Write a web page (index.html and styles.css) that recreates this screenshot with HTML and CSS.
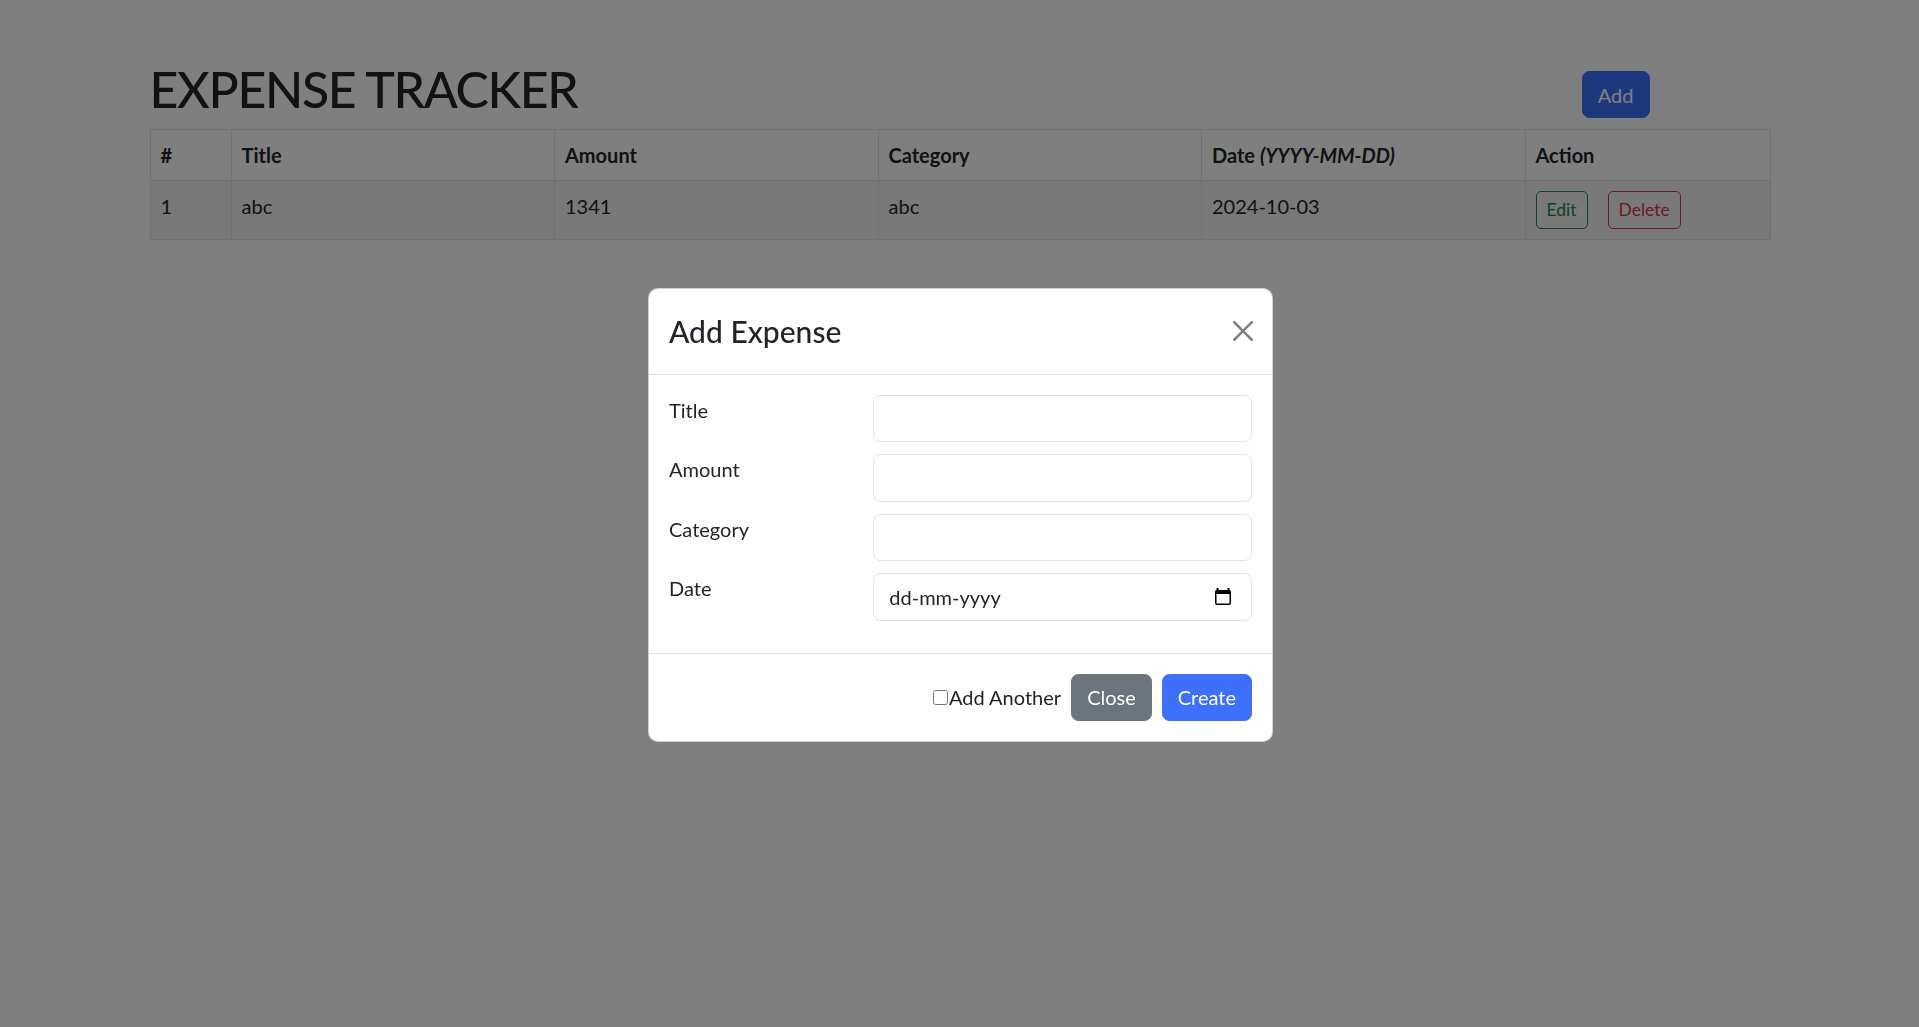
FILE: index.html
```html
<!DOCTYPE html>
<html lang="en">
<head>
<meta charset="utf-8">
<title>Expense Tracker</title>
<link rel="stylesheet" href="styles.css">
</head>
<body>
<div class="page">
  <div class="container">
    <div class="topbar">
      <h1 class="page-title">EXPENSE TRACKER</h1>
      <button class="btn btn-primary btn-add" type="button">Add</button>
    </div>
    <table class="table">
      <colgroup>
        <col class="c-num">
        <col class="c-wide">
        <col class="c-wide">
        <col class="c-wide">
        <col class="c-wide">
        <col class="c-action">
      </colgroup>
      <thead>
        <tr>
          <th>#</th>
          <th>Title</th>
          <th>Amount</th>
          <th>Category</th>
          <th>Date <i>(YYYY-MM-DD)</i></th>
          <th>Action</th>
        </tr>
      </thead>
      <tbody>
        <tr class="striped">
          <td>1</td>
          <td>abc</td>
          <td>1341</td>
          <td>abc</td>
          <td>2024-10-03</td>
          <td><button class="btn-sm btn-edit" type="button">Edit</button><button class="btn-sm btn-delete" type="button">Delete</button></td>
        </tr>
      </tbody>
    </table>
  </div>
</div>

<div class="backdrop"></div>

<div class="modal-wrap">
  <div class="modal">
    <div class="modal-header">
      <h4 class="modal-title">Add Expense</h4>
      <button class="btn-close" type="button" aria-label="Close">
        <svg viewBox="0 0 16 16" width="20" height="20" aria-hidden="true"><path d="M.293.293a1 1 0 0 1 1.414 0L8 6.586 14.293.293a1 1 0 1 1 1.414 1.414L9.414 8l6.293 6.293a1 1 0 0 1-1.414 1.414L8 9.414l-6.293 6.293a1 1 0 0 1-1.414-1.414L6.586 8 .293 1.707a1 1 0 0 1 0-1.414z"/></svg>
      </button>
    </div>
    <div class="modal-body">
      <div class="form-row">
        <label class="form-label">Title</label>
        <input class="form-control" type="text">
      </div>
      <div class="form-row">
        <label class="form-label">Amount</label>
        <input class="form-control" type="text">
      </div>
      <div class="form-row">
        <label class="form-label">Category</label>
        <input class="form-control" type="text">
      </div>
      <div class="form-row">
        <label class="form-label">Date</label>
        <div class="form-control date-control">
          <span class="date-text">dd-mm-yyyy</span>
          <svg class="cal-icon" viewBox="0 0 16 17" width="16" height="17" aria-hidden="true">
            <rect x="1.5" y="0" width="2" height="3"/>
            <rect x="12.5" y="0" width="2" height="3"/>
            <rect x="0.75" y="2.75" width="14.5" height="13.5" rx="1.2" fill="none" stroke="#000" stroke-width="1.5"/>
            <rect x="0.75" y="2.75" width="14.5" height="3.25"/>
          </svg>
        </div>
      </div>
    </div>
    <div class="modal-footer">
      <label class="check"><input class="check-box" type="checkbox">Add Another</label>
      <button class="btn btn-secondary" type="button">Close</button>
      <button class="btn btn-primary" type="button">Create</button>
    </div>
  </div>
</div>
</body>
</html>
```

FILE: styles.css
```css
* {
  box-sizing: border-box;
}

html, body {
  margin: 0;
  padding: 0;
  background: #ffffff;
}

body {
  font-family: "Lato", "Noto Sans", sans-serif;
  font-size: 20px;
  line-height: 30px;
  color: #212529;
  height: 1027px;
  overflow: hidden;
}

.container {
  width: 1620px;
  margin: 0 auto;
}

.topbar {
  display: flex;
  align-items: flex-start;
  justify-content: space-between;
  padding-top: 59px;
  margin-bottom: 10px;
}

.page-title {
  margin: 0;
  font-size: 50px;
  line-height: 60px;
  font-weight: 500;
  letter-spacing: -1.3px;
  color: #212529;
}

.btn {
  font-family: inherit;
  font-size: 20px;
  line-height: 30px;
  padding: 7.5px 15px;
  border: 1px solid transparent;
  border-radius: 7.5px;
  color: #ffffff;
  cursor: pointer;
}

.btn-primary {
  background: #3c70fd;
  border-color: #3c70fd;
}

.btn-secondary {
  background: #6c757d;
  border-color: #6c757d;
}

.btn-add {
  margin-top: 12px;
  margin-right: 120px;
}

.table {
  width: 100%;
  border-collapse: collapse;
  table-layout: fixed;
  color: #212529;
}

.c-num { width: 81px; }
.c-wide { width: 323.5px; }
.c-action { width: 245px; }

.table th,
.table td {
  padding: 10px;
  border: 1px solid #dee2e6;
  text-align: left;
  vertical-align: top;
  font-size: 20px;
  line-height: 30px;
  background: #ffffff;
}

.table th {
  font-weight: 700;
}

.table .striped td {
  background: #f2f2f2;
}

.btn-sm {
  font-family: inherit;
  font-size: 17.5px;
  line-height: 26.25px;
  padding: 5px 10px;
  border-radius: 5px;
  background: transparent;
  border: 1px solid;
  vertical-align: top;
  cursor: pointer;
}

.btn-edit {
  color: #198754;
  border-color: #198754;
}

.btn-delete {
  color: #dc3545;
  border-color: #dc3545;
  margin-left: 20px;
}

.backdrop {
  position: fixed;
  inset: 0;
  background: rgba(0, 0, 0, 0.5);
}

.modal-wrap {
  position: fixed;
  inset: 0;
  display: flex;
  align-items: center;
  justify-content: center;
  padding-top: 2px;
  padding-left: 2px;
}

.modal {
  width: 625px;
  background: #ffffff;
  border: 1px solid rgba(0, 0, 0, 0.175);
  border-radius: 10px;
  color: #212529;
}

.modal-header {
  display: flex;
  align-items: center;
  padding: 20px;
  border-bottom: 1px solid #dee2e6;
}

.modal-title {
  margin: 0;
  font-size: 30px;
  line-height: 45px;
  font-weight: 500;
}

.btn-close {
  margin: -10px -6px -10px auto;
  padding: 5px;
  width: 30px;
  height: 30px;
  border: 0;
  background: transparent;
  display: flex;
  align-items: center;
  justify-content: center;
  cursor: pointer;
}

.btn-close svg {
  display: block;
  fill: #000000;
  opacity: 0.5;
}

.modal-body {
  padding: 20px 20px 32px;
  display: flex;
  flex-direction: column;
  gap: 12px;
}

.form-row {
  display: grid;
  grid-template-columns: 174.3px 1fr;
  column-gap: 30px;
}

.form-label {
  font-size: 20px;
  line-height: 30px;
}

.form-control {
  width: 100%;
  height: 47.5px;
  padding: 7.5px 15px;
  border: 1px solid #dee2e6;
  border-radius: 7.5px;
  font-family: inherit;
  font-size: 20px;
  line-height: 30px;
  color: #212529;
  background: #ffffff;
}

.date-control {
  display: flex;
  align-items: center;
  justify-content: space-between;
  padding-right: 20px;
}

.cal-icon {
  display: block;
  fill: #000000;
}

.modal-footer {
  display: flex;
  align-items: center;
  justify-content: flex-end;
  padding: 15px;
  border-top: 1px solid #dee2e6;
}

.modal-footer > * {
  margin: 5px;
}

.check {
  display: flex;
  align-items: center;
  font-size: 20px;
  line-height: 30px;
}

.check-box {
  width: 15px;
  height: 15px;
  margin: 0 1px 0 5px;
}
```
